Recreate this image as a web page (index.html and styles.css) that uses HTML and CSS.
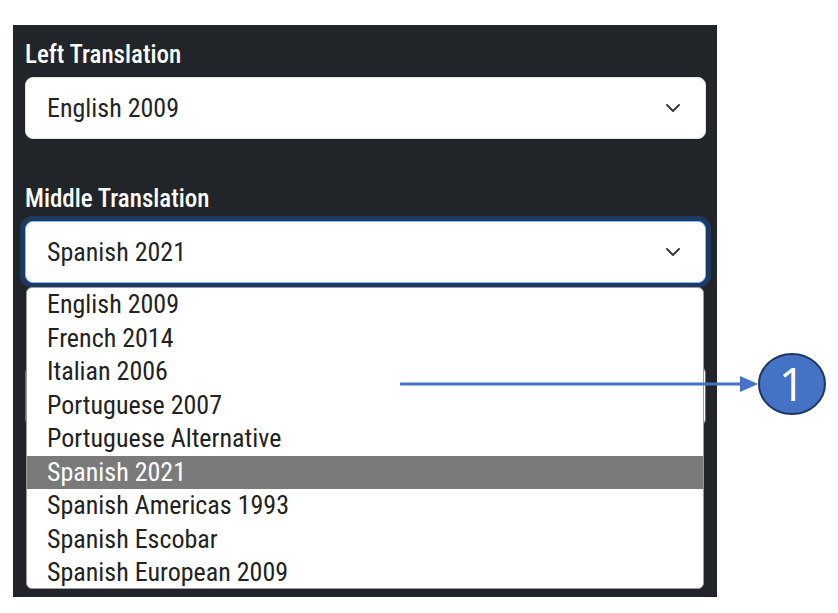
FILE: index.html
```html
<!DOCTYPE html>
<html lang="en">
<head>
<meta charset="utf-8">
<title>Translations</title>
<link rel="stylesheet" href="styles.css">
</head>
<body>
<div class="panel">
  <div class="field">
    <div class="lbl">Left Translation</div>
    <div class="select">
      <span class="val">English 2009</span>
      <svg class="chev" viewBox="0 0 16 16" width="16" height="16"><path d="M2 5l6 6 6-6" fill="none" stroke="#343a40" stroke-width="2" stroke-linecap="round" stroke-linejoin="round"/></svg>
    </div>
  </div>
  <div class="field open">
    <div class="lbl">Middle Translation</div>
    <div class="select focus">
      <span class="val">Spanish 2021</span>
      <svg class="chev" viewBox="0 0 16 16" width="16" height="16"><path d="M2 5l6 6 6-6" fill="none" stroke="#343a40" stroke-width="2" stroke-linecap="round" stroke-linejoin="round"/></svg>
    </div>
    <ul class="menu">
      <li>English 2009</li>
      <li>French 2014</li>
      <li>Italian 2006</li>
      <li>Portuguese 2007</li>
      <li>Portuguese Alternative</li>
      <li class="sel">Spanish 2021</li>
      <li>Spanish Americas 1993</li>
      <li>Spanish Escobar</li>
      <li>Spanish European 2009</li>
    </ul>
  </div>
  <div class="field" aria-hidden="true">
    <div class="lbl"></div>
    <div class="select hidden-sel"></div>
  </div>
</div>
<svg class="annot" width="838" height="613" viewBox="0 0 838 613">
  <line x1="400" y1="384" x2="744" y2="384" stroke="#4472c4" stroke-width="3"/>
  <polygon points="740,376 758,384 740,392" fill="#4472c4"/>
  <ellipse cx="792" cy="384" rx="33" ry="30" fill="#4472c4" stroke="#1f3864" stroke-width="2"/>
  <text x="792" y="401" text-anchor="middle" class="num">1</text>
</svg>
</body>
</html>
```
FILE: styles.css
```css
html, body {
  margin: 0;
  padding: 0;
  background: #ffffff;
}
body {
  width: 838px;
  height: 613px;
  position: relative;
  overflow: hidden;
  font-family: Roboto, "Liberation Sans", sans-serif;
}
.panel {
  margin: 25px 0 0 13px;
  width: 704px;
  height: 572px;
  box-sizing: border-box;
  padding: 15px 11px 0 12px;
  background: #212529;
  overflow: hidden;
  display: flex;
  flex-direction: column;
  gap: 45px;
}
.field {
  position: relative;
  display: flex;
  flex-direction: column;
  gap: 7px;
}
.field.open {
  z-index: 2;
}
.lbl {
  color: #ffffff;
  font-size: 25px;
  font-weight: 500;
  line-height: 30px;
  height: 30px;
  font-stretch: 84%;
  white-space: nowrap;
}
.select {
  height: 62px;
  box-sizing: border-box;
  background: #ffffff;
  border: 1px solid #dee2e6;
  border-radius: 8px;
  display: flex;
  align-items: center;
  justify-content: space-between;
  padding: 0 24px 0 21px;
}
.select.hidden-sel {
  border-color: #6c6f73;
}
.select.focus {
  border-color: #86b7fe;
  box-shadow: 0 0 0 5px #1d3a62;
}
.val {
  color: #212529;
  font-size: 26px;
  font-stretch: 85%;
  white-space: nowrap;
}
.chev {
  display: block;
}
.menu {
  position: absolute;
  top: 103px;
  left: 1px;
  width: 678px;
  margin: 0;
  padding: 0;
  list-style: none;
  background: #ffffff;
  border: 1px solid #9a9a9a;
  border-radius: 6px;
  box-sizing: border-box;
  height: 302px;
  overflow: hidden;
}
.menu li {
  height: 33.5px;
  line-height: 33.5px;
  padding-left: 20px;
  font-size: 26px;
  color: #222222;
  font-stretch: 87%;
  white-space: nowrap;
}
.menu li.sel {
  background: #7a7a7a;
  color: #ffffff;
}
.annot {
  position: absolute;
  left: 0;
  top: 0;
  z-index: 5;
  pointer-events: none;
}
.num {
  fill: #ffffff;
  font-family: "Open Sans", "Liberation Sans", sans-serif;
  font-size: 46px;
}
```
